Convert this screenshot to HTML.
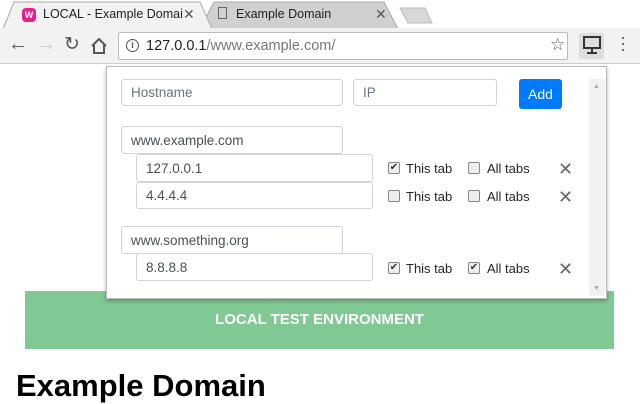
<!DOCTYPE html>
<html><head><style>
*{box-sizing:border-box;margin:0;padding:0}
body{width:640px;height:400px;overflow:hidden;background:#fff;font-family:"Liberation Sans",Arial,sans-serif;position:relative}
.a{position:absolute}
.inp{position:absolute;border:1px solid #ced4da;border-radius:3px;background:#fff;font-size:13.5px;color:#495057;padding-left:9px;display:flex;align-items:center}
.ph{color:#6c757d}
.cb{position:absolute;width:12px;height:12px;border:1px solid #888;border-radius:2px;background:#eee;font-size:10px;line-height:10px;text-align:center;color:#333}
.lbl{position:absolute;font-size:13px;color:#212529}
.x{position:absolute;font-size:18px;color:#666;line-height:18px}
</style></head><body>
<!-- tab bar -->
<div class="a" style="left:0;top:0;width:640px;height:28px;background:#fff"></div>
<svg class="a" style="left:0;top:0" width="460" height="30">
<path d="M200 29 L214 2 L384 2 L398 29Z" fill="#d0d0d0" stroke="#aaa"/>
<path d="M3 29 L14 2 L200 2 L212 29Z" fill="#f2f2f2" stroke="#aaa"/>
<path d="M400 8 L425 8 L432 23 L408 23Z" fill="#d8d8d8" stroke="#bbb"/>
</svg>
<div class="a" style="left:22px;top:8px;width:14px;height:14px;border-radius:4px;background:#e91e8c;color:#fff;font-size:9px;text-align:center;line-height:14px;font-weight:bold">W</div>
<div class="a" style="left:43px;top:7px;font-size:12.5px;color:#222">LOCAL - Example Domai</div>
<div class="a" style="left:183px;top:6px;font-size:14px;color:#555">✕</div>
<div class="a" style="left:218px;top:7px;width:9px;height:12px;border:1px solid #666"></div>
<div class="a" style="left:236px;top:7px;font-size:12.5px;color:#222">Example Domain</div>
<div class="a" style="left:375px;top:6px;font-size:14px;color:#555">✕</div>
<!-- toolbar -->
<div class="a" style="left:0;top:28px;width:640px;height:36px;background:#f2f2f2;border-bottom:1px solid #ccc"></div>
<div class="a" style="left:8px;top:33px;font-size:20px;color:#555">←</div>
<div class="a" style="left:36px;top:33px;font-size:20px;color:#ccc">→</div>
<div class="a" style="left:64px;top:33px;font-size:19px;color:#555">↻</div>
<svg class="a" style="left:90px;top:37px" width="18" height="18"><path d="M2 9 L9 2 L16 9 M4 8 V16 H14 V8" fill="none" stroke="#555" stroke-width="2"/></svg>
<div class="a" style="left:118px;top:32px;width:450px;height:28px;background:#fff;border:1px solid #bbb;border-radius:2px"></div>
<div class="a" style="left:126px;top:39px;width:13px;height:13px;border:1.5px solid #555;border-radius:50%;font-size:9px;text-align:center;line-height:11px;color:#555;font-weight:bold">i</div>
<div class="a" style="left:146px;top:38px;font-size:14.5px;color:#222">127.0.0.1<span style="color:#777">/www.example.com/</span></div>
<div class="a" style="left:550px;top:35px;font-size:17px;color:#555">☆</div>
<div class="a" style="left:579px;top:33px;width:25px;height:26px;background:#ddd;border-radius:2px"></div>
<svg class="a" style="left:583px;top:36px" width="18" height="20"><rect x="1" y="1" width="16" height="11" fill="none" stroke="#333" stroke-width="2"/><path d="M9 12 V16 M4 17 H14" stroke="#333" stroke-width="2"/></svg>
<div class="a" style="left:620px;top:34px;font-size:18px;color:#555;line-height:6px;width:4px">·<br>·<br>·</div>
<!-- page -->
<div class="a" style="left:25px;top:291px;width:589px;height:58px;background:#80c994;color:#fff;font-weight:bold;font-size:15px;text-align:center;line-height:58px">LOCAL TEST ENVIRONMENT</div>
<div class="a" style="left:16px;top:368px;font-size:31px;font-weight:bold;color:#000">Example Domain</div>
<!-- popup -->
<div class="a" style="left:106px;top:66px;width:501px;height:233px;background:#fff;border:1px solid #bbb;box-shadow:0 2px 4px rgba(0,0,0,.3)"></div>
<div class="a" style="left:589px;top:79px;width:16px;height:217px;background:#f1f1f1"></div>
<div class="a" style="left:593px;top:83px;font-size:7px;color:#aaa">▲</div>
<div class="a" style="left:593px;top:285px;font-size:7px;color:#aaa">▼</div>
<div class="inp" style="left:121px;top:79px;width:222px;height:27px"><span class="ph">Hostname</span></div>
<div class="inp" style="left:353px;top:79px;width:144px;height:27px"><span class="ph">IP</span></div>
<div class="a" style="left:519px;top:79px;width:43px;height:30px;background:#007bff;border-radius:3px;color:#fff;font-size:14px;text-align:center;line-height:30px">Add</div>
<div class="inp" style="left:121px;top:126px;width:222px;height:28px">www.example.com</div>
<div class="inp" style="left:136px;top:154px;width:237px;height:28px">127.0.0.1</div>
<div class="inp" style="left:136px;top:182px;width:237px;height:27px">4.4.4.4</div>
<div class="inp" style="left:121px;top:226px;width:222px;height:28px">www.something.org</div>
<div class="inp" style="left:136px;top:253px;width:237px;height:28px">8.8.8.8</div>
<div class="cb" style="left:388px;top:162px">✔</div><div class="lbl" style="left:406px;top:161px">This tab</div>
<div class="cb" style="left:468px;top:162px"></div><div class="lbl" style="left:487px;top:161px">All tabs</div>
<div class="x" style="left:558px;top:160px">✕</div>
<div class="cb" style="left:388px;top:190px"></div><div class="lbl" style="left:406px;top:189px">This tab</div>
<div class="cb" style="left:468px;top:190px"></div><div class="lbl" style="left:487px;top:189px">All tabs</div>
<div class="x" style="left:558px;top:188px">✕</div>
<div class="cb" style="left:388px;top:262px">✔</div><div class="lbl" style="left:406px;top:261px">This tab</div>
<div class="cb" style="left:468px;top:262px">✔</div><div class="lbl" style="left:487px;top:261px">All tabs</div>
<div class="x" style="left:558px;top:260px">✕</div>
</body></html>
